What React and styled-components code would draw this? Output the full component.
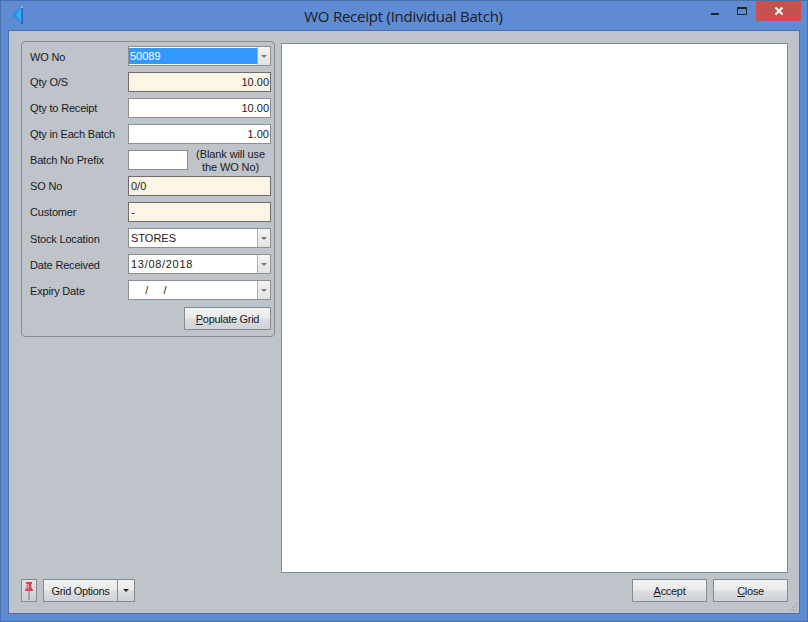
import React from 'react';
import styled, { createGlobalStyle } from 'styled-components';

const Global = createGlobalStyle`
  html, body { margin: 0; padding: 0; background: #5f8bd3; }
  body { width: 808px; height: 622px; overflow: hidden; }
`;

const Window = styled.div`
  width: 808px; height: 622px; box-sizing: border-box;
  background: #5f8bd3; border: 1px solid #4a70ab;
  display: flex; flex-direction: column;
  font-family: "Liberation Sans", Arial, sans-serif; font-size: 11px; color: #1a1a1a;
`;
const TitleBar = styled.div`
  height: 29px; flex: none; position: relative; display: flex; align-items: center; justify-content: center;
`;
const Title = styled.div`
  font-family: "Open Sans", sans-serif; font-size: 15px; color: #1c1c1c; letter-spacing: -0.24px; margin-left: -1px;
`;
const AppIcon = styled.svg`
  position: absolute; left: 10px; top: 5px;
`;
const Controls = styled.div`
  position: absolute; right: 6px; top: 0; display: flex; align-items: flex-start; gap: 1px;
`;
const ControlButton = styled.div`
  width: 26px; height: 20px; display: flex; align-items: center; justify-content: center;
`;
const CloseButton = styled.div`
  width: 45px; height: 20px; background: #c75050; display: flex; align-items: center; justify-content: center;
`;
const Body = styled.div`
  flex: 1; margin: 0 7px 7px 7px; background: #bfc4cb; border: 1px solid #4a70ab;
  padding: 10px 11px 11px 12px; display: flex; flex-direction: column; min-height: 0; position: relative;
`;
const Main = styled.div`
  flex: 1; display: flex; gap: 6px; min-height: 0; align-items: stretch;
`;
const Panel = styled.div`
  width: 254px; height: 296px; box-sizing: border-box; border: 1px solid #8a8a8a; border-radius: 4px;
  padding: 4px 3px 0 8px; flex: none; display: flex; flex-direction: column; gap: 6px;
`;
const Grid = styled.div`
  flex: 1; background: #fff; border: 1px solid #8a8a8a; margin-top: 2px;
`;
const Row = styled.div`
  display: flex; align-items: center; height: 20px;
`;
const Label = styled.div`
  width: 98px; flex: none; white-space: nowrap; position: relative; top: ${p => p.$low ? 1 : 0}px; letter-spacing: -0.18px;
`;
const Field = styled.div`
  width: 143px; height: 20px; box-sizing: border-box; background: ${p => p.$bg || '#fff'};
  border: 1px solid ${p => p.$dark ? '#6d6d6d' : '#8f8f8f'};
  display: flex; align-items: center; justify-content: ${p => p.$right ? 'flex-end' : 'flex-start'};
  padding: 0 0 0 2px; overflow: hidden;
`;
const FieldText = styled.span`
  padding-right: 1px;
`;
const Combo = styled.div`
  width: 143px; height: 20px; box-sizing: border-box; background: #fff; border: 1px solid #8f8f8f;
  display: flex; align-items: stretch;
`;
const ComboText = styled.div`
  flex: 1; display: flex; align-items: center; padding-left: ${p => p.$indent || 2}px; white-space: pre; padding-bottom: 1px;
  letter-spacing: ${p => p.$spacing || 0}px;
`;
const Selected = styled.div`
  flex: 1; margin: 1px 0; background: #3399ff; color: #fff; display: flex; align-items: center; padding-left: 1px;
`;
const ComboArrow = styled.div`
  width: 12px; flex: none; border-left: 1px solid #b0b0b0; background: linear-gradient(#f4f4f4, #e2e4e6);
  display: flex; align-items: center; justify-content: center;
`;
const Arrow = styled.div`
  width: 0; height: 0; border-left: 3px solid transparent; border-right: 3px solid transparent;
  border-top: 3px solid ${p => p.$color || '#7a7a7a'};
`;
const Prefix = styled(Field)` width: 60px; flex: none; `;
const Hint = styled.div`
  flex: 1; text-align: center; line-height: 13px; white-space: nowrap; padding: 2px 0 0 2px; letter-spacing: -0.1px;
`;
const ButtonRow = styled.div`
  display: flex; justify-content: flex-end; margin-top: 1px;
`;
const Button = styled.button`
  font: inherit; letter-spacing: -0.3px; color: #1a1a1a; box-sizing: border-box; height: 23px; width: ${p => p.$w}px; padding: 0;
  border: 1px solid #8a8a8a; border-radius: 0;
  background: linear-gradient(#f2f2f2 0%, #ebebeb 48%, #dcdee1 52%, #cfd2d6 100%);
  display: flex; align-items: center; justify-content: center;
`;
const Footer = styled.div`
  flex: none; margin-top: 6px; display: flex; align-items: center; height: 23px;
`;
const Pin = styled.div`
  width: 16px; height: 23px; box-sizing: border-box; border: 1px solid #8a8a8a; display: flex; align-items: center; justify-content: center;
  background: linear-gradient(#e0e2e5, #c9ccd1); margin-right: 6px;
`;
const SplitArrow = styled(Button)` border-left: none; `;
const Spacer = styled.div` flex: 1; `;
const Gap = styled.div` width: 6px; `;
const U = styled.span` text-decoration: underline; `;
const Grip = styled.svg` position: absolute; right: 1px; bottom: 1px; `;

const Drop = () => <ComboArrow><Arrow /></ComboArrow>;

export default function App() {
  return (
    <Window>
      <Global />
      <TitleBar>
        <AppIcon width="12" height="18" viewBox="0 0 12 18">
          <path d="M11 1 L1 9 L11 17 Z" fill="#1f8fe8" />
          <path d="M11 1 L5 9 L11 17 Z" fill="#35b4f2" />
          <path d="M11 0 L11 18" stroke="#1238c8" strokeWidth="1" />
          <path d="M11 0 L11 2" stroke="#e8f4ff" strokeWidth="1" />
        </AppIcon>
        <Title>WO Receipt (Individual Batch)</Title>
        <Controls>
          <ControlButton>
            <svg width="10" height="10" viewBox="0 0 10 10"><rect x="1" y="7" width="8" height="2" fill="#222" /></svg>
          </ControlButton>
          <ControlButton>
            <svg width="12" height="12" viewBox="0 0 12 12"><rect x="1.5" y="2.5" width="9" height="7" fill="none" stroke="#222" /><rect x="1" y="2" width="10" height="2" fill="#222" /></svg>
          </ControlButton>
          <CloseButton>
            <svg width="10" height="10" viewBox="0 0 10 10"><path d="M1.5 1.5 L8.5 8.5 M8.5 1.5 L1.5 8.5" stroke="#fff" strokeWidth="2" /></svg>
          </CloseButton>
        </Controls>
      </TitleBar>
      <Body>
        <Main>
          <Panel>
            <Row><Label $low>WO No</Label><Combo><Selected>50089</Selected><Drop /></Combo></Row>
            <Row><Label>Qty O/S</Label><Field $bg="#fdf5e6" $dark $right><FieldText>10.00</FieldText></Field></Row>
            <Row><Label>Qty to Receipt</Label><Field $right><FieldText>10.00</FieldText></Field></Row>
            <Row><Label>Qty in Each Batch</Label><Field $right><FieldText>1.00</FieldText></Field></Row>
            <Row><Label>Batch No Prefix</Label><Prefix /><Hint>(Blank will use<br />the WO No)</Hint></Row>
            <Row><Label>SO No</Label><Field $bg="#fdf5e6" $dark><FieldText>0/0</FieldText></Field></Row>
            <Row><Label>Customer</Label><Field $bg="#fdf5e6" $dark><FieldText>-</FieldText></Field></Row>
            <Row><Label $low>Stock Location</Label><Combo><ComboText>STORES</ComboText><Drop /></Combo></Row>
            <Row><Label $low>Date Received</Label><Combo><ComboText $spacing={0.7}>13/08/2018</ComboText><Drop /></Combo></Row>
            <Row><Label $low>Expiry Date</Label><Combo><ComboText $indent={4}>{'    /     /'}</ComboText><Drop /></Combo></Row>
            <ButtonRow><Button $w={87}><span><U>P</U>opulate Grid</span></Button></ButtonRow>
          </Panel>
          <Grid />
        </Main>
        <Footer>
          <Pin>
            <svg width="10" height="21" viewBox="0 0 10 21">
              <rect x="4" y="11" width="2" height="9" fill="#a4a4a4" />
              <path d="M2 2 H8 V4 H7 L7.5 8 L9 10 V11 H1 V10 L2.5 8 L3 4 H2 Z" fill="#d9434f" />
              <rect x="3.5" y="4" width="1.5" height="5" fill="#f2979c" />
            </svg>
          </Pin>
          <Button $w={75}>Grid Options</Button>
          <SplitArrow $w={17}><Arrow $color="#222" /></SplitArrow>
          <Spacer />
          <Button $w={75}><span><U>A</U>ccept</span></Button>
          <Gap />
          <Button $w={75}><span><U>C</U>lose</span></Button>
        </Footer>
        <Grip width="10" height="10" viewBox="0 0 10 10" fill="#aeb3ba">
          <rect x="7" y="1" width="2" height="2" /><rect x="4" y="4" width="2" height="2" /><rect x="7" y="4" width="2" height="2" />
          <rect x="1" y="7" width="2" height="2" /><rect x="4" y="7" width="2" height="2" /><rect x="7" y="7" width="2" height="2" />
        </Grip>
      </Body>
    </Window>
  );
}
